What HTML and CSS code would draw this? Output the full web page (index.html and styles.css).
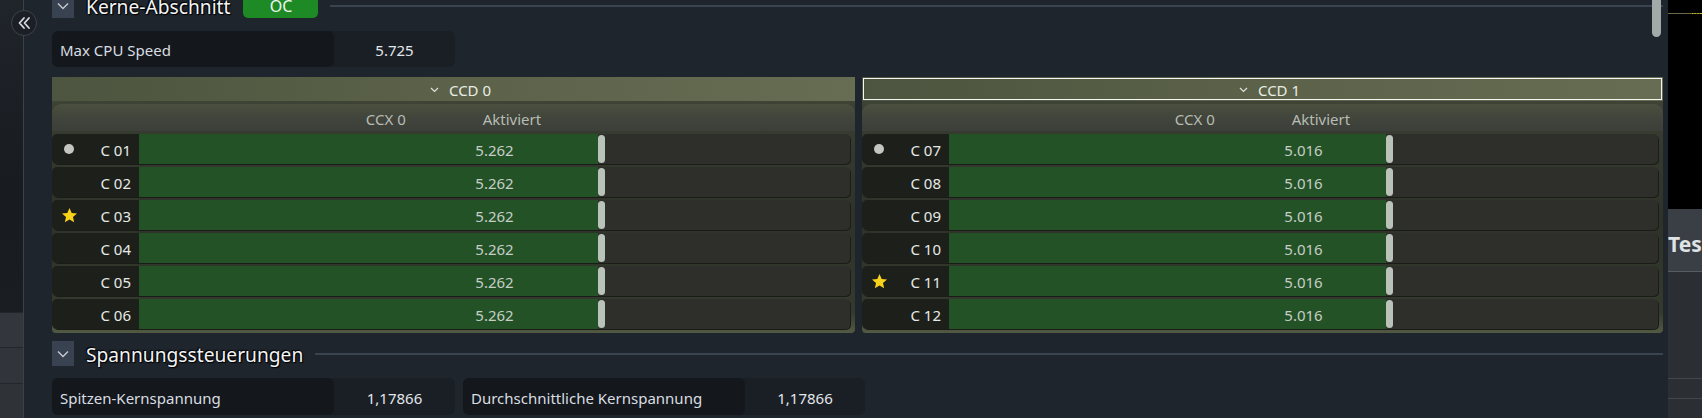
FILE: index.html
```html
<!DOCTYPE html>
<html lang="de">
<head>
<meta charset="utf-8">
<title>Kerne-Abschnitt</title>
<link rel="stylesheet" href="styles.css">
</head>
<body>
<div class="app">
  <aside class="sidebar">
    <div class="side-top"></div>
    <div class="side-rows">
      <div class="side-row"></div>
      <div class="side-row"></div>
      <div class="side-row"></div>
    </div>
    <button class="collapse" aria-label="Einklappen">
      <svg width="16" height="16" viewBox="0 0 16 16"><path d="M8 3 L3.5 8 L8 13 M13 3 L8.5 8 L13 13" fill="none" stroke="#d6dade" stroke-width="1.8" stroke-linecap="round" stroke-linejoin="round"/></svg>
    </button>
  </aside>

  <main class="content">
    <div class="scroll-inner">
      <div class="section-head">
        <span class="chev-box"><svg width="12" height="8" viewBox="0 0 12 8"><path d="M1 1.5 L6 6.5 L11 1.5" fill="none" stroke="#c9cdd2" stroke-width="1.3"/></svg></span>
        <span class="section-title">Kerne-Abschnitt</span>
        <span class="badge">OC</span>
        <span class="rule"></span>
      </div>

      <div class="stat-row first">
        <div class="stat"><span class="stat-label">Max CPU Speed</span><span class="stat-value">5.725</span></div>
      </div>

      <div class="ccd-grid">
        <section class="ccd">
          <div class="ccd-head"><svg width="9" height="6" viewBox="0 0 9 6"><path d="M1 1 L4.5 4.5 L8 1" fill="none" stroke="#dfe3d8" stroke-width="1.2"/></svg><span>CCD 0</span></div>
          <div class="ccx-head"><span>CCX 0</span><span>Aktiviert</span></div>
          <div class="rows">
            <div class="core"><div class="core-label"><span class="mark"><span class="dot"></span></span><span class="cname">C 01</span></div><div class="slider"><div class="bar"><div class="fill" style="width:459px"></div><div class="handle"></div><div class="track"></div></div><span class="val">5.262</span></div></div>
            <div class="core"><div class="core-label"><span class="mark"></span><span class="cname">C 02</span></div><div class="slider"><div class="bar"><div class="fill" style="width:459px"></div><div class="handle"></div><div class="track"></div></div><span class="val">5.262</span></div></div>
            <div class="core"><div class="core-label"><span class="mark"><svg class="star" width="17" height="17" viewBox="0 0 24 24"><path d="M12 1.5 L15.1 8.5 L22.6 9.2 L16.9 14.2 L18.6 21.7 L12 17.8 L5.4 21.7 L7.1 14.2 L1.4 9.2 L8.9 8.5 Z" fill="#f6d21a"/></svg></span><span class="cname">C 03</span></div><div class="slider"><div class="bar"><div class="fill" style="width:459px"></div><div class="handle"></div><div class="track"></div></div><span class="val">5.262</span></div></div>
            <div class="core"><div class="core-label"><span class="mark"></span><span class="cname">C 04</span></div><div class="slider"><div class="bar"><div class="fill" style="width:459px"></div><div class="handle"></div><div class="track"></div></div><span class="val">5.262</span></div></div>
            <div class="core"><div class="core-label"><span class="mark"></span><span class="cname">C 05</span></div><div class="slider"><div class="bar"><div class="fill" style="width:459px"></div><div class="handle"></div><div class="track"></div></div><span class="val">5.262</span></div></div>
            <div class="core"><div class="core-label"><span class="mark"></span><span class="cname">C 06</span></div><div class="slider"><div class="bar"><div class="fill" style="width:459px"></div><div class="handle"></div><div class="track"></div></div><span class="val">5.262</span></div></div>
          </div>
        </section>

        <section class="ccd">
          <div class="ccd-head selected"><svg width="9" height="6" viewBox="0 0 9 6"><path d="M1 1 L4.5 4.5 L8 1" fill="none" stroke="#dfe3d8" stroke-width="1.2"/></svg><span>CCD 1</span></div>
          <div class="ccx-head"><span>CCX 0</span><span>Aktiviert</span></div>
          <div class="rows">
            <div class="core"><div class="core-label"><span class="mark"><span class="dot"></span></span><span class="cname">C 07</span></div><div class="slider"><div class="bar"><div class="fill" style="width:437px"></div><div class="handle"></div><div class="track"></div></div><span class="val">5.016</span></div></div>
            <div class="core"><div class="core-label"><span class="mark"></span><span class="cname">C 08</span></div><div class="slider"><div class="bar"><div class="fill" style="width:437px"></div><div class="handle"></div><div class="track"></div></div><span class="val">5.016</span></div></div>
            <div class="core"><div class="core-label"><span class="mark"></span><span class="cname">C 09</span></div><div class="slider"><div class="bar"><div class="fill" style="width:437px"></div><div class="handle"></div><div class="track"></div></div><span class="val">5.016</span></div></div>
            <div class="core"><div class="core-label"><span class="mark"></span><span class="cname">C 10</span></div><div class="slider"><div class="bar"><div class="fill" style="width:437px"></div><div class="handle"></div><div class="track"></div></div><span class="val">5.016</span></div></div>
            <div class="core"><div class="core-label"><span class="mark"><svg class="star" width="17" height="17" viewBox="0 0 24 24"><path d="M12 1.5 L15.1 8.5 L22.6 9.2 L16.9 14.2 L18.6 21.7 L12 17.8 L5.4 21.7 L7.1 14.2 L1.4 9.2 L8.9 8.5 Z" fill="#f6d21a"/></svg></span><span class="cname">C 11</span></div><div class="slider"><div class="bar"><div class="fill" style="width:437px"></div><div class="handle"></div><div class="track"></div></div><span class="val">5.016</span></div></div>
            <div class="core"><div class="core-label"><span class="mark"></span><span class="cname">C 12</span></div><div class="slider"><div class="bar"><div class="fill" style="width:437px"></div><div class="handle"></div><div class="track"></div></div><span class="val">5.016</span></div></div>
          </div>
        </section>
      </div>

      <div class="section-head second">
        <span class="chev-box"><svg width="12" height="8" viewBox="0 0 12 8"><path d="M1 1.5 L6 6.5 L11 1.5" fill="none" stroke="#c9cdd2" stroke-width="1.3"/></svg></span>
        <span class="section-title">Spannungssteuerungen</span>
        <span class="rule"></span>
      </div>

      <div class="stat-row last">
        <div class="stat"><span class="stat-label">Spitzen-Kernspannung</span><span class="stat-value">1,17866</span></div>
        <div class="stat"><span class="stat-label">Durchschnittliche Kernspannung</span><span class="stat-value">1,17866</span></div>
      </div>
    </div>
    <div class="scrollbar"></div>
  </main>

  <div class="neighbor">
    <div class="nb-black"><div class="trace"></div></div>
    <div class="nb-tab">Test</div>
    <div class="nb-body"><div class="nb-line"></div><div class="nb-line"></div></div>
  </div>
</div>
</body>
</html>
```
FILE: styles.css
```css
* { box-sizing: border-box; }
html, body { margin: 0; padding: 0; }
body {
  width: 1702px;
  height: 418px;
  overflow: hidden;
  background: #1f252d;
  font-family: "Noto Sans", "Open Sans", sans-serif;
  color: #dde1e5;
}
.app {
  display: flex;
  height: 418px;
}

/* sidebar */
.sidebar {
  position: relative;
  width: 24px;
  flex: none;
  display: flex;
  flex-direction: column;
  border-right: 1px solid #39414b;
  background: linear-gradient(180deg, #20252b 0%, #181b20 45%, #1b1e22 100%);
}
.side-top { flex: 1; }
.side-rows { height: 106px; display: flex; flex-direction: column; }
.side-row {
  flex: 1;
  background: #33373d;
  border-top: 1px solid #23272c;
}
.side-row:nth-child(2) { background: #31353b; }
.side-row:nth-child(3) { background: #2f3338; }
.collapse {
  position: absolute;
  left: 11px;
  top: 10px;
  width: 26px;
  height: 26px;
  padding: 0;
  border-radius: 50%;
  border: 1px solid #3b434c;
  background: #1c2026;
  display: flex;
  align-items: center;
  justify-content: center;
  z-index: 2;
}

/* main content */
.content {
  position: relative;
  width: 1644px;
  flex: none;
  padding: 0 5px 0 28px;
  overflow: hidden;
}
.scroll-inner { margin-top: -7px; }

.section-head {
  display: flex;
  align-items: center;
  height: 25px;
}
.section-head.second { margin-top: 8px; }
.chev-box {
  width: 22px;
  height: 25px;
  background: #394250;
  display: flex;
  align-items: center;
  justify-content: center;
  flex: none;
}
.section-title {
  margin-left: 12px;
  font-size: 19.2px;
  line-height: 25px;
  padding-top: 1px;
  color: #f2f4f6;
  text-shadow: 0 0 2px #000, 1px 1px 1px #000, -1px -1px 1px #000;
  white-space: nowrap;
}
.badge {
  margin-left: 13px;
  width: 75px;
  height: 25px;
  border-radius: 5px;
  background: #1e8a26;
  color: #f0f4f0;
  font-size: 16px;
  display: flex;
  align-items: center;
  justify-content: center;
  padding-top: 1px;
}
.rule {
  flex: 1;
  height: 2px;
  margin-left: 12px;
  background: #3a4450;
}

/* stats */
.stat-row { display: flex; gap: 8px; }
.stat-row.first { margin-top: 13px; }
.stat-row.last { margin-top: 12px; }
.stat {
  width: 403px;
  height: 37px;
  display: flex;
  border-radius: 6px;
  background: #1a1f25;
  font-size: 15px;
}
.stat-row.first .stat { height: 36px; }
.stat + .stat { width: 402px; }
.stat-label {
  width: 282px;
  border-radius: 6px;
  background: #14181c;
  padding: 2px 0 0 8px;
  display: flex;
  align-items: center;
  color: #d9dde1;
}
.stat-value {
  flex: 1;
  display: flex;
  align-items: center;
  justify-content: center;
  padding-top: 2px;
  color: #e2e6ea;
}

/* CCD panels */
.ccd-grid {
  margin-top: 10px;
  display: grid;
  grid-template-columns: 803px 801px;
  gap: 7px;
}
.ccd {
  background: linear-gradient(180deg, #4b5240 0%, #383d31 14%, #2e3229 55%, #343a2d 92%, #535a43 100%);
  border-radius: 2px 2px 4px 4px;
  padding-bottom: 4px;
}
.ccd-head {
  height: 24px;
  display: flex;
  align-items: center;
  justify-content: center;
  gap: 10px;
  padding: 1px 0 0 14px;
  font-size: 15px;
  color: #e9ede4;
  background: linear-gradient(90deg, #4d543f 0%, #5a6148 45%, #666d53 100%);
}
.ccd-head.selected {
  outline: 1px solid #f4f5f0;
  outline-offset: -2px;
}
.ccx-head {
  margin-top: 3px;
  height: 27px;
  display: flex;
  align-items: center;
  justify-content: center;
  gap: 77px;
  padding-top: 2px;
  font-size: 15px;
  color: #b7bcb3;
  border-radius: 9px 9px 0 0;
  background: linear-gradient(180deg, #4a503f 0%, #41453b 50%, #3c3f3a 100%);
}
.rows {
  margin-top: 3px;
  display: flex;
  flex-direction: column;
  gap: 3px;
}
.core {
  height: 30px;
  display: flex;
  margin-right: 5px;
  border-radius: 5px;
  box-shadow: 1px 1px 0 #1a1c17;
}
.core-label {
  width: 87px;
  flex: none;
  display: flex;
  align-items: center;
  background: #1d1f1b;
  border-radius: 5px 0 0 5px;
  padding-right: 8px;
}
.mark {
  width: 34px;
  display: flex;
  align-items: center;
  justify-content: center;
}
.dot {
  width: 10px;
  height: 10px;
  border-radius: 50%;
  background: #c3c7c2;
}
.cname {
  flex: 1;
  text-align: right;
  font-size: 15px;
  padding-top: 2px;
  color: #e6eae6;
}
.slider {
  flex: 1;
  display: grid;
}
.bar, .val { grid-area: 1 / 1; }
.bar {
  display: flex;
  align-items: center;
  background: #2e2f2b;
  border-radius: 0 5px 5px 0;
  overflow: hidden;
}
.fill {
  height: 100%;
  flex: none;
  background: #245227;
}
.handle {
  width: 7px;
  height: 28px;
  flex: none;
  border-radius: 4px;
  background: #bac3ba;
}
.track { flex: 1; height: 100%; }
.val {
  display: flex;
  align-items: center;
  justify-content: center;
  padding-top: 2px;
  font-size: 15px;
  color: #c6cec6;
}

/* scrollbar */
.scrollbar {
  position: absolute;
  left: 1628px;
  top: -6px;
  width: 9px;
  height: 43px;
  border-radius: 5px;
  background: #a2aaa9;
}

/* neighbor window */
.neighbor {
  flex: 1;
  display: flex;
  flex-direction: column;
  overflow: hidden;
}
.nb-black {
  height: 213px;
  background: #000;
  padding-top: 13px;
}
.trace {
  height: 1px;
  background: linear-gradient(90deg, #6a6a44 0%, #6a6a44 70%, #d8c81c 72%, #6a6a44 76%, #d8c81c 80%, #6a6a44 84%, #d8c81c 88%, #6a6a44 92%, #d8c81c 96%);
}
.nb-tab {
  height: 63px;
  background: #3a3f45;
  border-bottom: 1px solid #565c63;
  font-size: 21px;
  font-weight: bold;
  color: #dfe3e6;
  line-height: 62px;
  padding-top: 4px;
  white-space: nowrap;
  font-family: "Noto Sans", sans-serif;
}
.nb-body {
  flex: 1;
  background: #2b2f34;
  padding-top: 106px;
}
.nb-line {
  height: 1px;
  background: #42474d;
  margin-bottom: 19px;
}
```
